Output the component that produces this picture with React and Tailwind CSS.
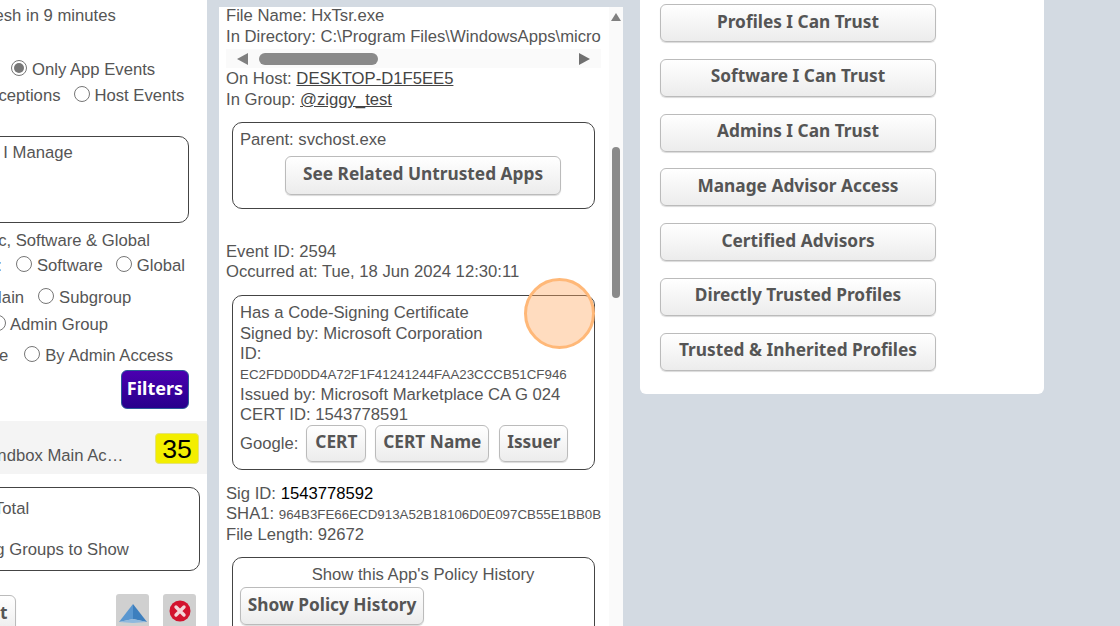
import React from 'react';

const Radio = ({ checked }) => (
  <span className={`block w-[16px] h-[16px] rounded-full border border-[#767676] bg-white shrink-0 ${checked ? 'p-[2px]' : ''}`}>
    {checked && <span className="block w-full h-full rounded-full bg-[#777]" />}
  </span>
);

const GrayButton = ({ children, className = '' }) => (
  <div className={`flex items-center justify-center rounded-[6px] border border-[#bbb] bg-gradient-to-b from-white to-[#ececec] font-['Noto_Sans',sans-serif] font-bold text-[#555] text-[17.3px] whitespace-nowrap shadow-[0_1px_1px_rgba(0,0,0,0.15)] shrink-0 ${className}`}>
    <span className="-mt-[3px]">{children}</span>
  </div>
);

const Box = ({ children, className = '' }) => (
  <div className={`border border-[#444] rounded-[10px] bg-white ${className}`}>{children}</div>
);

function LeftPanel() {
  return (
    <aside className="w-[207px] h-[626px] bg-white overflow-hidden shrink-0 whitespace-nowrap">
      <p className="h-[20px] pt-0 mt-[6px] -ml-[37px]">Refresh in 9 minutes</p>

      <div className="h-[20px] mt-[34px] ml-[11px] flex items-center">
        <span className="-mt-[4px]"><Radio checked /></span>
        <span className="ml-[5px]">Only App Events</span>
      </div>
      <div className="h-[20px] mt-[6px] -ml-[21px] flex items-center">
        <span>Exceptions</span>
        <span className="ml-[14px] -mt-[4px]"><Radio /></span>
        <span className="ml-[4px]">Host Events</span>
      </div>

      <Box className="-ml-[60px] mt-[30px] w-[249px] h-[87px] pl-[3px] pt-[6px]">Groups I Manage</Box>

      <p className="h-[20px] mt-[8px] -ml-[108px] text-right w-[258px]">Public, Software &amp; Global</p>
      <div className="h-[20px] mt-[5px] -ml-[48px] flex items-center">
        <span>Public:</span>
        <span className="ml-[14px] -mt-[4px]"><Radio /></span>
        <span className="ml-[5px]">Software</span>
        <span className="ml-[13px] -mt-[4px]"><Radio /></span>
        <span className="ml-[5px]">Global</span>
      </div>
      <div className="h-[20px] mt-[12px] -ml-[12px] flex items-center">
        <span>Main</span>
        <span className="ml-[14px] -mt-[4px]"><Radio /></span>
        <span className="ml-[5px]">Subgroup</span>
      </div>
      <div className="h-[20px] mt-[7px] -ml-[10px] flex items-center">
        <span className="-mt-[4px]"><Radio /></span>
        <span className="ml-[4px]">Admin Group</span>
      </div>
      <div className="h-[20px] mt-[11px] -ml-[39px] flex items-center">
        <span>Scope</span>
        <span className="ml-[16px] -mt-[4px]"><Radio /></span>
        <span className="ml-[5px]">By Admin Access</span>
      </div>

      <div className="mt-[4px] ml-[121px] w-[68px] h-[39px] rounded-[6px] border border-[#2a5a9a] bg-gradient-to-b from-[#4b00b0] to-[#27008c] text-white font-['Noto_Sans',sans-serif] font-bold text-[18px] flex items-center justify-center">
        <span className="-mt-[3px]">Filters</span>
      </div>

      <div className="mt-[12px] h-[53px] bg-[#f4f4f4] flex items-center justify-between pr-[8px]">
        <span className="mt-[17px] -ml-[23px]">Sandbox Main Ac…</span>
        <span className="w-[44px] h-[31px] rounded-[4px] border border-[#e4e27a] bg-[#f3ee00] text-black text-[26.7px] flex items-center justify-center shrink-0 mt-[2px]">35</span>
      </div>

      <Box className="-ml-[40px] mt-[13px] w-[240px] h-[84px] pl-[33px] pt-[11px]">
        <p>Total</p>
        <p className="mt-[21px] -ml-[69px]">Remaining Groups to Show</p>
      </Box>

      <div className="mt-[23px] flex items-start">
        <GrayButton className="-ml-[32px] mt-[1px] w-[48px] h-[38px]">List</GrayButton>
        <div className="ml-[100px] w-[33px] h-[33px] rounded-t-[3px] bg-[#d0d0d0] flex items-center justify-center">
          <svg width="30" height="26" viewBox="0 0 30 26">
            <path d="M15 6 L29 24 L15 21 Z" fill="#3d7fbe" />
            <path d="M15 6 L1 24 L15 21 Z" fill="#5a97d0" />
            <path d="M1 24 L15 21 L29 24 L15 25 Z" fill="#8fb9de" />
          </svg>
        </div>
        <div className="ml-[14px] w-[33px] h-[33px] rounded-t-[3px] bg-[#d0d0d0] flex items-center justify-center">
          <svg width="22" height="22" viewBox="0 0 22 22">
            <circle cx="11" cy="11" r="10.5" fill="#d3132f" />
            <path d="M7 7 L15 15 M15 7 L7 15" stroke="#f4d6da" strokeWidth="3.4" strokeLinecap="round" />
          </svg>
        </div>
      </div>
    </aside>
  );
}

function MiddlePanel() {
  return (
    <section className="relative ml-[12px] mt-[7px] w-[404px] h-[619px] bg-white overflow-hidden shrink-0 flex">
      <div className="w-[390px] pl-[7px] shrink-0 whitespace-nowrap">
        <p className="h-[21px] -mt-[1px]">File Name: HxTsr.exe</p>
        <p className="h-[20px] w-[375px] overflow-hidden">In Directory: C:\Program Files\WindowsApps\microsoft.windowscommunicationsapps</p>
        <div className="w-[375px] h-[19px] mt-[2px] bg-[#fafafa] flex items-center justify-between pl-[11px] pr-[11px]">
          <div className="flex items-center">
            <svg width="11" height="12" viewBox="0 0 11 12"><path d="M11 0 V12 L0 6 Z" fill="#808080" /></svg>
            <span className="ml-[11px] w-[119px] h-[12px] rounded-full bg-[#8a8a8a]" />
          </div>
          <svg width="11" height="12" viewBox="0 0 11 12"><path d="M0 0 V12 L11 6 Z" fill="#707070" /></svg>
        </div>
        <p className="h-[21px] mt-[1px]">On Host: <span className="underline text-[#444]">DESKTOP-D1F5EE5</span></p>
        <p className="h-[20px]">In Group: <span className="underline text-[#444]">@ziggy_test</span></p>

        <Box className="ml-[6px] mt-[12px] w-[363px] h-[87px] pl-[7px] pt-[7px]">
          <p>Parent: svchost.exe</p>
          <GrayButton className="ml-[45px] mt-[6px] w-[276px] h-[39px]">See Related Untrusted Apps</GrayButton>
        </Box>

        <p className="h-[20px] mt-[33px]">Event ID: 2594</p>
        <p className="h-[20px]">Occurred at: Tue, 18 Jun 2024 12:30:11</p>

        <Box className="ml-[6px] mt-[13px] w-[363px] h-[175px] pl-[7px] pt-[7px]">
          <p className="h-[21px]">Has a Code-Signing Certificate</p>
          <p className="h-[20px]">Signed by: Microsoft Corporation</p>
          <p className="h-[21px]">ID:</p>
          <p className="h-[20px] text-[13.33px] leading-[20px]">EC2FDD0DD4A72F1F41241244FAA23CCCB51CF946</p>
          <p className="h-[20px]">Issued by: Microsoft Marketplace CA G 024</p>
          <p className="h-[20px]">CERT ID: 1543778591</p>
          <div className="flex items-center">
            <span className="mt-[1px]">Google:</span>
            <GrayButton className="ml-[8px] w-[60px] h-[37px]">CERT</GrayButton>
            <GrayButton className="ml-[9px] w-[114px] h-[37px]">CERT Name</GrayButton>
            <GrayButton className="ml-[10px] w-[69px] h-[37px]">Issuer</GrayButton>
          </div>
        </Box>

        <p className="h-[20px] mt-[14px]">Sig ID: <span className="text-black">1543778592</span></p>
        <p className="h-[21px]">SHA1: <span className="text-[13.33px]">964B3FE66ECD913A52B18106D0E097CB55E1BB0B</span></p>
        <p className="h-[20px]">File Length: 92672</p>

        <Box className="ml-[6px] mt-[12px] w-[363px] h-[100px] pl-[7px] pt-[7px]">
          <p className="text-center pl-[12px]">Show this App's Policy History</p>
          <GrayButton className="mt-[2px] w-[184px] h-[38px]">Show Policy History</GrayButton>
        </Box>
      </div>

      <div className="w-[14px] h-full bg-[#fafafa] relative flex flex-col items-center">
        <svg className="mt-[6px]" width="10" height="8" viewBox="0 0 10 8"><path d="M5 0 L10 8 H0 Z" fill="#808080" /></svg>
        <span className="mt-[126px] w-[8px] h-[151px] rounded-full bg-[#8a8a8a]" />
      </div>

      {/* click marker from the recording */}
      <div className="absolute left-[305px] top-[271px] w-[71px] h-[71px] rounded-full bg-[#ffa860]/40 border-[3px] border-[#ffb878]" />
    </section>
  );
}

function RightPanel() {
  const links = [
    'Profiles I Can Trust',
    'Software I Can Trust',
    'Admins I Can Trust',
    'Manage Advisor Access',
    'Certified Advisors',
    'Directly Trusted Profiles',
    'Trusted & Inherited Profiles',
  ];
  return (
    <section className="ml-[17px] w-[404px] h-[394px] bg-white rounded-b-[6px] shrink-0 pl-[20px] pt-[4px] flex flex-col gap-[16.75px]">
      {links.map((link) => (
        <GrayButton key={link} className="w-[276px] h-[38px]">{link}</GrayButton>
      ))}
    </section>
  );
}

export default function App() {
  return (
    <div className="w-[1120px] h-[626px] bg-[#d3dae2] overflow-hidden flex items-start font-['Liberation_Sans',sans-serif] text-[16.67px] leading-[20px] text-[#555]">
      <LeftPanel />
      <MiddlePanel />
      <RightPanel />
    </div>
  );
}
